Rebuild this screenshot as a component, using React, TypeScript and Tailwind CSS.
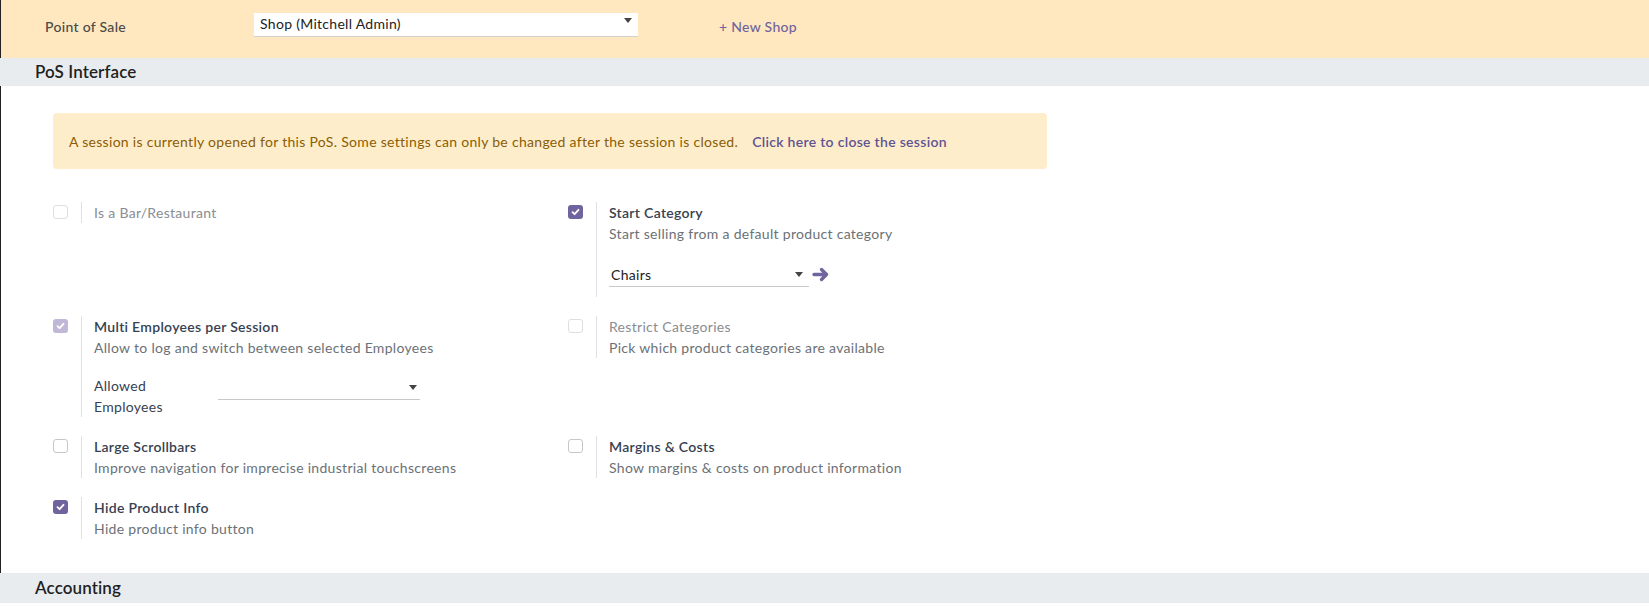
import React from 'react'

const font = { fontFamily: 'Lato, "Noto Sans", sans-serif' }

function Check({ checked, disabled }: { checked?: boolean; disabled?: boolean }) {
  if (checked) {
    return (
      <div className={`w-[15px] h-[14px] mt-[3px] rounded-[3px] flex items-center justify-center ${disabled ? 'bg-[#c0b8d6]' : 'bg-[#71639e]'}`}>
        <svg width="9" height="8" viewBox="0 0 9 8">
          <path d="M1.5 4.2 L3.6 6.2 L7.5 1.8" fill="none" stroke="white" strokeWidth="1.8" strokeLinecap="round" strokeLinejoin="round" />
        </svg>
      </div>
    )
  }
  return <div className={`w-[15px] h-[14px] mt-[3px] rounded-[3px] border ${disabled ? 'border-[#dcdfe3]' : 'border-[#c4c8cd]'} bg-white`} />
}

function Caret() {
  return <span className="w-0 h-0 border-l-[4px] border-r-[4px] border-t-[5px] border-l-transparent border-r-transparent border-t-[#444]" />
}

function Setting({
  title,
  desc,
  checked,
  disabled,
  bold = true,
  children,
}: {
  title: string
  desc?: string
  checked?: boolean
  disabled?: boolean
  bold?: boolean
  children?: React.ReactNode
}) {
  return (
    <div className="flex items-start">
      <div className="w-[28px] shrink-0">
        <Check checked={checked} disabled={disabled} />
      </div>
      <div className="border-l border-[#dee2e6] pl-[12px] self-stretch">
        <div className={`text-[14px] leading-[21px] ${bold ? 'font-semibold text-[#374151]' : 'text-[#8a8d91]'}`}>{title}</div>
        {desc && <div className="text-[14px] leading-[21px] text-[#6c7177]">{desc}</div>}
        {children}
      </div>
    </div>
  )
}

export default function App() {
  return (
    <div className="w-[1649px] h-[606px] overflow-hidden bg-white tracking-[0.3px]" style={font}>
      {/* top bar */}
      <div className="h-[58px] bg-[#ffe8bf] border-l border-[#222] flex items-start pt-[13px]">
        <div className="w-[253px] pl-[44px] mt-[3px] text-[14px] leading-[21px] font-medium text-[#4a4a4a]">Point of Sale</div>
        <div className="w-[384px] h-[24px] bg-white border-b border-[#d0d0d0] flex items-start justify-between pl-[6px] pr-[6px]">
          <span className="text-[14px] leading-[21px] text-[#222]">Shop (Mitchell Admin)</span>
          <span className="mt-[8px]">
            <Caret />
          </span>
        </div>
        <div className="ml-[81px] mt-[3px] text-[14px] leading-[21px] font-medium text-[#71639e]">+ New Shop</div>
      </div>

      <div className="h-[28px] bg-[#e9ecef] flex items-center pl-[35px] text-[17px] tracking-[0.1px] font-semibold text-[#1f1f1f]">PoS Interface</div>

      <div className="border-l border-[#222] pt-[27px] pl-[52px] pb-[34px]">
        <div className="w-[994px] h-[56px] rounded-[4px] bg-[#feedcb] flex items-center pl-[16px] text-[14px]">
          <span className="text-[#8a5d04]">A session is currently opened for this PoS. Some settings can only be changed after the session is closed.</span>
          <span className="ml-[14px] font-semibold text-[#5f5492]">Click here to close the session</span>
        </div>

        <div className="mt-[33px] grid grid-cols-[515px_480px] gap-y-[19px]">
          <div>
            <Setting title="Is a Bar/Restaurant" disabled bold={false} />
          </div>
          <div>
            <Setting title="Start Category" desc="Start selling from a default product category" checked>
              <div className="mt-[19px] pb-[10px] flex items-center">
                <div className="w-[200px] h-[24px] border-b border-[#c8c8c8] flex items-center justify-between pl-[2px] pr-[6px]">
                  <span className="text-[14px] text-[#222]">Chairs</span>
                  <Caret />
                </div>
                <svg width="18" height="15" viewBox="0 0 18 15" className="ml-[3px] mt-[-2px]">
                  <path d="M2 7.5 H14.5 M9.5 2.5 L14.5 7.5 L9.5 12.5" fill="none" stroke="#71639e" strokeWidth="3.4" strokeLinecap="round" strokeLinejoin="round" />
                </svg>
              </div>
            </Setting>
          </div>

          <div>
            <Setting title="Multi Employees per Session" desc="Allow to log and switch between selected Employees" checked disabled>
              <div className="mt-[17px] flex items-start">
                <div className="w-[124px] pr-[40px] text-[14px] leading-[21px] text-[#374151]">Allowed Employees</div>
                <div className="w-[202px] h-[24px] border-b border-[#c8c8c8] flex items-center justify-end pr-[3px] mt-[1px]">
                  <Caret />
                </div>
              </div>
            </Setting>
          </div>
          <div>
            <Setting title="Restrict Categories" desc="Pick which product categories are available" disabled bold={false} />
          </div>

          <div>
            <Setting title="Large Scrollbars" desc="Improve navigation for imprecise industrial touchscreens" />
          </div>
          <div>
            <Setting title="Margins & Costs" desc="Show margins & costs on product information" />
          </div>

          <div>
            <Setting title="Hide Product Info" desc="Hide product info button" checked />
          </div>
          <div />
        </div>
      </div>

      <div className="h-[30px] bg-[#e9ecef] flex items-center pl-[35px] text-[17px] tracking-[0.1px] font-semibold text-[#1f1f1f]">Accounting</div>
    </div>
  )
}
